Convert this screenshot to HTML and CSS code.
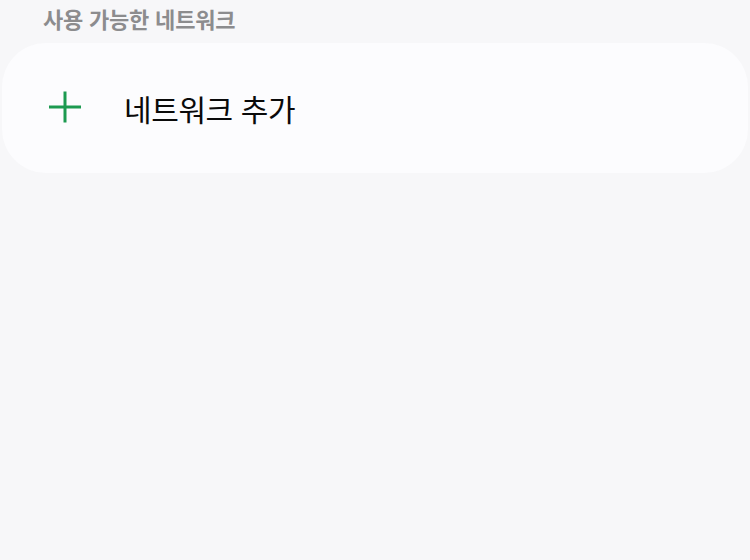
FILE: index.html
```html
<!DOCTYPE html>
<html lang="ko">
<head>
<meta charset="utf-8">
<link rel="stylesheet" href="styles.css">
</head>
<body>
<div class="screen">
  <div class="section-title">사용 가능한 네트워크</div>
  <div class="card">
    <div class="row">
      <span class="icon">
        <svg width="34" height="34" viewBox="0 0 34 34"><path d="M17 1.5V32.5M1 17H33" stroke="#1c9a50" stroke-width="3" fill="none"/></svg>
      </span>
      <span class="label">네트워크 추가</span>
    </div>
  </div>
</div>
</body>
</html>
```
FILE: styles.css
```css
html, body {
  margin: 0;
  padding: 0;
  background: #f7f7f9;
}
.screen {
  width: 750px;
  height: 560px;
  font-family: "Noto Sans CJK KR", "Noto Sans", sans-serif;
  display: flex;
  flex-direction: column;
}
.section-title {
  padding-left: 43px;
  height: 43px;
  font-size: 22px;
  font-weight: 700;
  color: #8c8c8e;
  line-height: 36px;
  letter-spacing: -0.2px;
}
.card {
  margin: 0 2px;
  height: 130px;
  background: #fcfcfe;
  border-radius: 44px;
  display: flex;
  align-items: center;
}
.row {
  display: flex;
  align-items: center;
  padding-left: 46px;
}
.icon {
  display: flex;
  width: 34px;
  height: 34px;
  margin-top: -2px;
}
.label {
  margin-left: 42px;
  font-size: 30px;
  color: #0a0a0a;
  letter-spacing: -0.4px;
  line-height: 40px;
}
```
